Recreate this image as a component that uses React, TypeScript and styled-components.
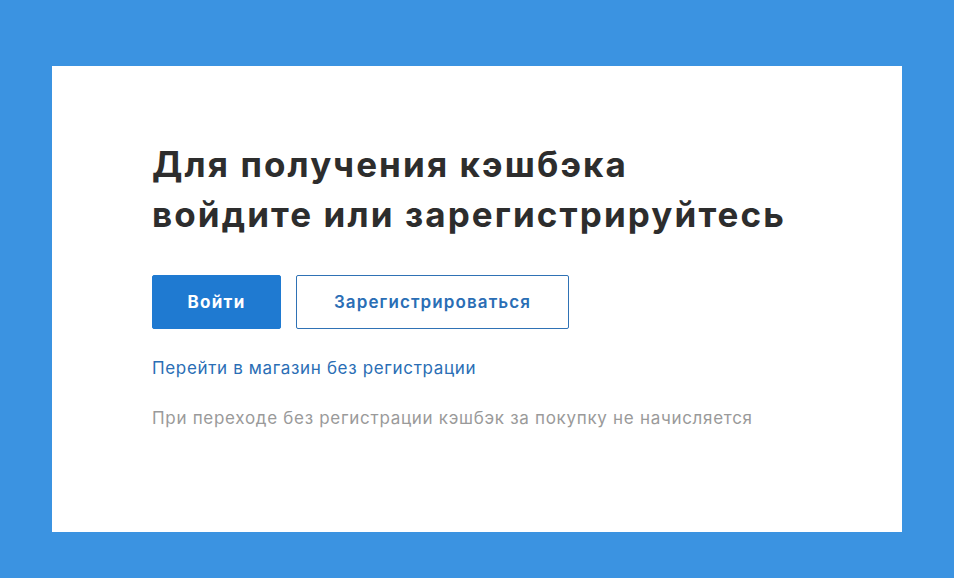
import React from "react";
import styled, { createGlobalStyle } from "styled-components";

const Global = createGlobalStyle`
  html, body { margin: 0; padding: 0; }
  body { background: #3b93e1; font-family: Inter, "Noto Sans", sans-serif; }
`;

const Page = styled.div`
  width: 954px;
  height: 578px;
  padding: 66px 52px 46px 52px;
  box-sizing: border-box;
  display: flex;
`;

const Card = styled.div`
  flex: 1;
  background: #ffffff;
  padding: 73px 100px 0 100px;
  display: flex;
  flex-direction: column;
  align-items: flex-start;
`;

const Title = styled.h1`
  margin: 0;
  font-size: 35px;
  line-height: 50px;
  font-weight: 700;
  color: #2d2d2d;
  letter-spacing: 2.1px;
`;

const Buttons = styled.div`
  display: flex;
  gap: 15px;
  margin-top: 36px;
`;

const Button = styled.button<{ $primary?: boolean }>`
  height: 54px;
  box-sizing: border-box;
  border-radius: 2px;
  font-family: Inter, "Noto Sans", sans-serif;
  font-size: 17px;
  letter-spacing: ${(p) => (p.$primary ? "1.3px" : "1.1px")};
  font-weight: ${(p) => (p.$primary ? 700 : 600)};
  width: ${(p) => (p.$primary ? "129px" : "273px")};
  background: ${(p) => (p.$primary ? "#1f7ad1" : "#ffffff")};
  color: ${(p) => (p.$primary ? "#ffffff" : "#2a6eb5")};
  border: 1px solid ${(p) => (p.$primary ? "#1f7ad1" : "#2f72b5")};
  cursor: pointer;
`;

const Link = styled.a`
  margin-top: 27px;
  font-size: 17px;
  line-height: 24px;
  letter-spacing: 0.65px;
  color: #2a6eb5;
  text-decoration: none;
`;

const Note = styled.p`
  margin: 26px 0 0 0;
  font-size: 17px;
  line-height: 24px;
  letter-spacing: 0.7px;
  color: #9a9a9a;
`;

export default function App() {
  return (
    <>
      <Global />
      <Page>
        <Card>
          <Title>
            Для получения кэшбэка
            <br />
            войдите или зарегистрируйтесь
          </Title>
          <Buttons>
            <Button $primary>Войти</Button>
            <Button>Зарегистрироваться</Button>
          </Buttons>
          <Link href="#">Перейти в магазин без регистрации</Link>
          <Note>При переходе без регистрации кэшбэк за покупку не начисляется</Note>
        </Card>
      </Page>
    </>
  );
}
